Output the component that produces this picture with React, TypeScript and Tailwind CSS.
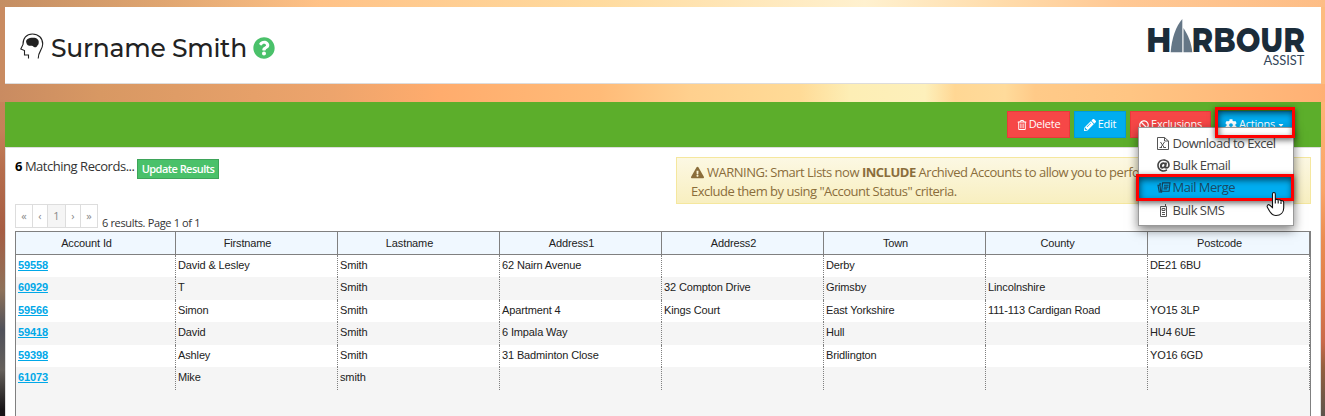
import React from "react";
import { FaQuestionCircle, FaBan, FaCog, FaExclamationTriangle, FaRegTrashAlt, FaAt, FaCaretDown, FaPencilAlt } from "react-icons/fa";

const columns = ["Account Id", "Firstname", "Lastname", "Address1", "Address2", "Town", "County", "Postcode"];

const rows: string[][] = [
  ["59558", "David & Lesley", "Smith", "62 Nairn Avenue", "", "Derby", "", "DE21 6BU"],
  ["60929", "T", "Smith", "", "32 Compton Drive", "Grimsby", "Lincolnshire", ""],
  ["59566", "Simon", "Smith", "Apartment 4", "Kings Court", "East Yorkshire", "111-113 Cardigan Road", "YO15 3LP"],
  ["59418", "David", "Smith", "6 Impala Way", "", "Hull", "", "HU4 6UE"],
  ["59398", "Ashley", "Smith", "31 Badminton Close", "", "Bridlington", "", "YO16 6GD"],
  ["61073", "Mike", "smith", "", "", "", "", ""],
];

function HeadIcon() {
  return (
    <svg className="mb-1 h-[26px] w-6 shrink-0" viewBox="0 0 24 26" fill="none">
      <path
        d="M8.500 25.500V22H4.500v-4.500L.8 16 3 11.500C2.800 5 6.500 1 12.400 1 18.500 1 22.700 5 22.700 11c0 6-4.500 7-4.500 14.500"
        stroke="#222"
        strokeWidth="1.100"
      />
      <path
        d="M6.300 9.500C5.300 6.500 8.500 4.800 13 4.800c4 0 6.200 2 5.700 5.200-.1 1.500-.8 2-1.200 2.500-.5 1.300-1.500 2-2.800 1.800-1.300-.2-1.500-1.400-2.800-1.600-2.200.2-5 .2-5.600-3.200z"
        fill="#222"
      />
    </svg>
  );
}

function Logo() {
  return (
    <svg className="h-[52px] w-[160px] shrink-0 overflow-visible" viewBox="0 0 160 52">
      <g fill="#1b2c3a" fontFamily="Montserrat, Lato, sans-serif" fontWeight="800" fontSize="33.500">
        <text x="0" y="35.300" textLength="25.500" lengthAdjust="spacingAndGlyphs">H</text>
        <text x="45.500" y="35.300" textLength="113.500" lengthAdjust="spacingAndGlyphs">RBOUR</text>
      </g>
      <path d="M24.700 35.300C25.500 22 30 9 36.300 2v33.300z" fill="#647686" />
      <path d="M37.500 11C42 18 45.500 26 46.300 35.300h-8.800z" fill="#647686" />
      <text x="117.500" y="48" textLength="41" lengthAdjust="spacingAndGlyphs" fill="#34465a" fontFamily="Lato, sans-serif" fontSize="13.500">ASSIST</text>
    </svg>
  );
}

function ExcelIcon() {
  return (
    <svg className="h-[13px] w-3" viewBox="0 0 12 13" fill="none" stroke="#555" strokeWidth="1">
      <path d="M.5.5h7l4 3.500v8.500H.5zM7.500.5V4h4M3.500 5l4 6M7.500 5l-4 6M2.500 10.500h2.500M6.500 10.500h2.500" />
    </svg>
  );
}

function MergeIcon() {
  return (
    <svg className="h-[12px] w-[14px]" viewBox="0 0 14 13" fill="none" stroke="#17415a" strokeWidth="1.200">
      <path d="M5.500 1h8l-1 9h-8zM7 3.500h5M6.800 5.500h5M6.500 7.500h4M4 2H2.500l1 9h1.500M2 3.500H.5L2 11.500" />
    </svg>
  );
}

function PhoneIcon() {
  return (
    <svg className="mx-[3px] h-[13px] w-[7px]" viewBox="0 0 7 13" fill="none" stroke="#555" strokeWidth="1">
      <path d="M.5 2.500h6v10h-6zM5.500 0v2M2 4.500h3v2H2zM2 8.500h3M2 10.500h3" />
    </svg>
  );
}

function Cursor() {
  return (
    <svg className="absolute top-[63px] left-[127px] h-[26px] w-[19px]" viewBox="0 0 19 26">
      <path
        d="M6.500 13.500V3C6.500 1 9.300 1 9.300 3v6c.3-1 2.900-.8 2.900.4.400-1 2.800-.6 2.800.8.500-1 2.700-.4 2.700 1.200V17c0 4.500-3 7.500-7.700 7.500-3.500 0-5-2-6.500-4.500L1.500 16.500C.5 14.800 2 13 3.500 14l3 2.500z"
        fill="#fff"
        stroke="#111"
        strokeWidth="1.100"
      />
      <path d="M9.300 9v3.500M12.200 9.500v3M15 10.500v2.500" stroke="#111" strokeWidth="1.100" />
    </svg>
  );
}

const menu = [
  { label: "Download to Excel", icon: <ExcelIcon />, active: false },
  { label: "Bulk Email", icon: <FaAt className="size-[13px]" />, active: false },
  { label: "Mail Merge", icon: <MergeIcon />, active: true },
  { label: "Bulk SMS", icon: <PhoneIcon />, active: false },
];

function ActionsMenu() {
  return (
    <div className="absolute top-[25px] left-[1133px] z-10 h-[99px] w-[156px] border border-[#999] bg-white pt-[4px] shadow-[0_4px_10px_rgba(0,0,0,0.5)]">
      {menu.map((item) => (
        <div
          key={item.label}
          className={
            item.active
              ? "flex h-[22px] items-center bg-[#00adf0] pl-[18px] text-[13px] text-[#1d4a63]"
              : "flex h-[22.500px] items-center pl-[18px] text-[13px] text-[#444]"
          }
        >
          <span className="flex w-[15.500px] shrink-0 items-center">{item.icon}</span>
          <span className="whitespace-nowrap tracking-[-0.5px]">{item.label}</span>
        </div>
      ))}
      <div className="absolute top-[46px] left-[-3px] h-[27px] w-[158px] border-[3px] border-[#f00] shadow-[0_2px_6px_rgba(0,0,0,0.6),inset_1px_3px_6px_rgba(0,0,0,0.6)]" />
      <Cursor />
    </div>
  );
}

const button = "flex h-[27px] items-center justify-center gap-[2px] border text-[11px] font-medium tracking-[-0.25px] text-white";
const pageCell = "flex items-center justify-center border-r border-[#ddd] text-[11px] text-[#888]";
const grid = "grid grid-cols-[160px_repeat(7,162px)]";

export default function App() {
  return (
    <div className="flex h-[416px] flex-col overflow-hidden bg-[linear-gradient(180deg,#c98b61_0px,#c58159_130px,#b56d4c_170px,#a65d43_230px,#8d7159_290px,#50515a_330px,#65605b_370px,#171416_410px)] font-['Open_Sans','Noto_Sans',sans-serif] text-[#333]">
      <div className="h-[7px] shrink-0 bg-[linear-gradient(90deg,#c48e63_0px,#dfa570_160px,#ffc287_320px,#ffdb9f_600px,#fff1cf_865px,#ffdcab_1000px,#ffc894_1120px,#fdbd86_1325px)]" />
      <div className="flex h-[77px] shrink-0 bg-[linear-gradient(90deg,#c98b61_5px,#fdbc80_1320px)] pl-[5px]">
        <header className="flex w-[1316px] justify-between border-b border-[#ddd] bg-white pr-[15px] pl-[15px]">
          <div className="flex h-[82px] items-center">
            <HeadIcon />
            <h1 className="ml-[7px] w-[196px] pt-px font-['Montserrat','Noto_Sans',sans-serif] text-[25px] font-medium tracking-[-0.25px] whitespace-nowrap text-[#222]">Surname Smith</h1>
            <FaQuestionCircle className="ml-[6px] size-[22px] text-[#4ac16a]" />
          </div>
          <div className="pt-[10px]">
            <Logo />
          </div>
        </header>
      </div>
      <div className="h-[18px] shrink-0 bg-[linear-gradient(90deg,#c98b61_0px,#d89863_100px,#eda46c_330px,#ffac6d_440px,#ffbb78_600px,#ffd08e_690px,#ffdb97_800px,#fdeeb5_850px,#fdf0bb_925px,#ffd794_955px,#ffdb9b_1005px,#ffca88_1035px,#ffc583_1130px,#ffb074_1325px)]" />

      <div className="flex h-[314px] shrink-0">
        <div className="w-[5px]" />
        <main className="flex w-[1316px] flex-col bg-white">
          <div className="relative flex h-[45px] shrink-0 justify-end gap-1 bg-[#5cae2b] pt-[9px] pr-[26px]">
            <button className={`${button} w-[63px] border-[#e83a3a] bg-[#f64747]`}><FaRegTrashAlt className="size-[10px]" />Delete</button>
            <button className={`${button} w-[52px] border-[#009be0] bg-[#00adf0]`}><FaPencilAlt className="size-3" />Edit</button>
            <button className={`${button} w-[81px] border-[#e83a3a] bg-[#f64747]`}><FaBan className="size-[10px]" />Exclusions</button>
            <button className={`${button} w-[80px] border-[#009be0] bg-[#00adf0]`}><FaCog className="size-3" />Actions<FaCaretDown className="size-2" /></button>
            <ActionsMenu />
            <div className="absolute top-[5px] left-[1210px] z-20 h-[31px] w-[80px] border-[3px] border-[#f00] shadow-[0_2px_6px_rgba(0,0,0,0.6),inset_1px_3px_6px_rgba(0,0,0,0.6)]" />
          </div>

          <section className="flex grow flex-col border-x border-t border-[#ddd] pr-[9px] pl-[9px]">
            <div className="flex h-[56px] justify-between pt-[9px]">
              <div className="flex h-[20px] items-center text-[13px] tracking-[-0.47px]">
                <span className="w-[118px] whitespace-nowrap"><b className="text-black">6</b> Matching Records...</span>
                <button className="mt-[3px] ml-1 h-5 w-[82px] border border-[#3ea45a] bg-[#4ac16a] text-[11px] leading-[18px] font-semibold tracking-[-0.55px] whitespace-nowrap text-white">Update Results</button>
              </div>
              <div className="h-[47px] w-[635px] overflow-hidden border border-[#f5e79e] bg-linear-to-b from-[#fcf8e3] to-[#f8efc0] pt-[5px] pl-[14px] text-[13px] leading-[18px] tracking-[-0.49px] whitespace-nowrap text-[#8a6d3b]">
                <p><FaExclamationTriangle className="mr-[3px] mb-[3px] inline size-[13px]" />WARNING: Smart Lists now <b>INCLUDE</b> Archived Accounts to allow you to perform</p>
                <p>Exclude them by using "Account Status" criteria.</p>
              </div>
            </div>
            <div className="flex h-[27px]">
              <div className="flex h-6 border-y border-l border-[#ddd]">
                <span className={`${pageCell} w-[17px]`}>«</span>
                <span className={`${pageCell} w-[15px]`}>‹</span>
                <span className={`${pageCell} w-[18px] bg-[#f5f5f5]`}>1</span>
                <span className={`${pageCell} w-[15px]`}>›</span>
                <span className={`${pageCell} w-[17px]`}>»</span>
              </div>
              <span className="ml-1 pt-[11px] text-[11px] leading-4 tracking-[-0.35px]">6 results. Page 1 of 1</span>
            </div>
            <div className="w-[1296px] grow border-x border-t border-[#808080] bg-[#f5f5f5] font-['Liberation_Sans',Arial,sans-serif] text-[11px] tracking-[-0.13px] text-[#222]">
              <div className={`${grid} h-[23px] border-b border-[#808080] bg-[#f0f8ff]`}>
                {columns.map((name) => (
                  <div key={name} className="border-r border-[#808080] pr-[18px] text-center leading-[23px]">{name}</div>
                ))}
              </div>
              {rows.map((row, index) => (
                <div key={row[0]} className={index % 2 ? `${grid} h-[23px] bg-[#f5f5f5]` : `${grid} h-[22px] bg-white`}>
                  {row.map((value, column) => (
                    <div key={column} className="border-r border-dotted border-[#808080] pl-[2px] leading-[21px] whitespace-nowrap">
                      {column === 0 ? <a className="font-bold text-[#00a8e8] underline">{value}</a> : value}
                    </div>
                  ))}
                </div>
              ))}
            </div>
          </section>
        </main>
        <div className="w-[4px] bg-[linear-gradient(180deg,#ffb477_0px,#f9a468_90px,#e98c52_140px,#df7e4a_190px,#c96a4a_240px,#94603f_265px,#5c544c_314px)]" />
      </div>
    </div>
  );
}
